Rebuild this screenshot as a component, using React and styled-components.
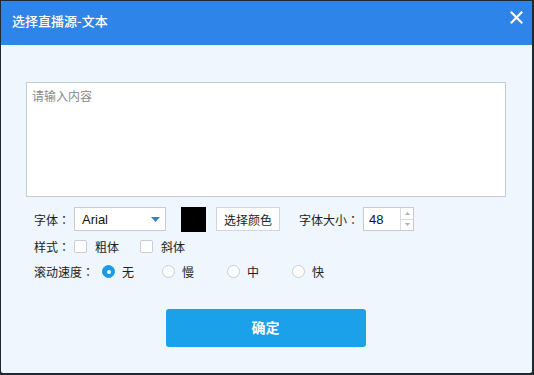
import React from "react";
import styled, { createGlobalStyle } from "styled-components";

const Global = createGlobalStyle`
  html, body { margin: 0; padding: 0; background: #1e2a33; }
  body { font-family: "Noto Sans CJK SC", "Noto Sans", sans-serif; }
  * { box-sizing: border-box; }
`;

const Win = styled.div`
  width: 534px;
  height: 375px;
  background: #1e2a33;
  padding: 1px 2px 2px 1px;
  display: flex;
`;

const Dialog = styled.div`
  flex: 1;
  display: flex;
  flex-direction: column;
  background: #eff6fd;
  border-radius: 2px;
  overflow: hidden;
`;

const TitleBar = styled.div`
  height: 44px;
  background: #2f84ea;
  display: flex;
  align-items: center;
  justify-content: space-between;
  padding: 0 8px 5px 11px;
  color: #fff;
  font-size: 13px;
  font-weight: 500;
`;

const CloseBtn = styled.div`
  width: 16px;
  height: 16px;
  display: flex;
  align-items: center;
  justify-content: center;
  margin-bottom: 7px;
`;

const Body = styled.div`
  flex: 1;
  display: flex;
  flex-direction: column;
  padding: 37px 26px 0 25px;
`;

const TextArea = styled.div`
  height: 115px;
  background: #fff;
  border: 1px solid #c6ccd3;
  padding: 4px 5px;
  font-size: 12px;
  color: #8a8a8a;
`;

const Row = styled.div`
  display: flex;
  align-items: center;
  height: ${p => p.$h || 25}px;
  margin-top: ${p => p.$mt || 0}px;
  padding-left: 8px;
  font-size: 12px;
  color: #222;
`;

const Label = styled.span`
  width: ${p => p.$w || 40}px;
  margin-left: ${p => p.$ml || 0}px;
  flex-shrink: 0;
  white-space: nowrap;
`;

const Colon = styled.span`
  font-family: "Noto Sans CJK TC", "Noto Sans CJK SC", sans-serif;
`;

const Select = styled.div`
  width: 92px;
  height: 24px;
  background: #fff;
  border: 1px solid #c6ccd3;
  display: flex;
  align-items: center;
  justify-content: space-between;
  padding: 0 5px 0 7px;
  font-family: "Liberation Sans", Arial, sans-serif;
  font-size: 13px;
  color: #111;
`;

const Swatch = styled.div`
  width: 25px;
  height: 25px;
  background: #000;
  margin-left: 15px;
`;

const Button = styled.div`
  height: 24px;
  padding: 0 7px;
  margin-left: 10px;
  background: #fff;
  border: 1px solid #cfd6dd;
  display: flex;
  align-items: center;
  font-size: 12px;
  color: #222;
`;

const NumInput = styled.div`
  width: 51px;
  height: 24px;
  background: #fff;
  border: 1px solid #c6ccd3;
  display: flex;
  font-family: "Liberation Sans", Arial, sans-serif;
  font-size: 13px;
  color: #111;
`;

const NumVal = styled.div`
  flex: 1;
  display: flex;
  align-items: center;
  padding-left: 5px;
`;

const Spin = styled.div`
  width: 13px;
  border-left: 1px solid #d8dde2;
  display: flex;
  flex-direction: column;
`;

const SpinHalf = styled.div`
  flex: 1;
  display: flex;
  align-items: center;
  justify-content: center;
  border-top: ${p => (p.$bottom ? "1px solid #d8dde2" : "none")};
`;

const Check = styled.span`
  width: 13px;
  height: 13px;
  border: 1px solid #c8ced4;
  background: #fff;
  border-radius: 2px;
  margin: 0 8px 0 0;
  flex-shrink: 0;
`;

const Option = styled.label`
  display: flex;
  align-items: center;
  margin-right: ${p => p.$mr || 0}px;
`;

const Radio = styled.span`
  width: 13px;
  height: 13px;
  border-radius: 50%;
  flex-shrink: 0;
  margin-right: 7px;
  display: flex;
  align-items: center;
  justify-content: center;
  background: ${p => (p.$on ? "#1a9be6" : "#fff")};
  border: 1px solid ${p => (p.$on ? "#1a9be6" : "#c8ced4")};
  &::after {
    content: "";
    width: 4px;
    height: 4px;
    border-radius: 50%;
    background: #fff;
    display: ${p => (p.$on ? "block" : "none")};
  }
`;

const Footer = styled.div`
  display: flex;
  justify-content: center;
  margin-top: 25px;
  padding-right: 1px;
`;

const Primary = styled.div`
  width: 200px;
  height: 38px;
  background: #1ba1e9;
  border-radius: 3px;
  display: flex;
  align-items: center;
  justify-content: center;
  color: #fff;
  font-size: 14px;
  font-weight: bold;
  padding-bottom: 2px;
`;

export default function App() {
  return (
    <Win>
      <Global />
      <Dialog>
        <TitleBar>
          <span>选择直播源-文本</span>
          <CloseBtn>
            <svg width="13" height="13" viewBox="0 0 13 13">
              <path d="M1.5 1.5 L11.5 11.5 M11.5 1.5 L1.5 11.5" stroke="#fff" strokeWidth="2.2" strokeLinecap="square" />
            </svg>
          </CloseBtn>
        </TitleBar>
        <Body>
          <TextArea>请输入内容</TextArea>
          <Row $mt={10} $h={24}>
            <Label>字体<Colon>：</Colon></Label>
            <Select>
              <span>Arial</span>
              <svg width="9" height="5" viewBox="0 0 9 5">
                <path d="M0 0 L9 0 L4.5 5 Z" fill="#3b7fc4" />
              </svg>
            </Select>
            <Swatch />
            <Button>选择颜色</Button>
            <Label $w={64} $ml={19}>字体大小<Colon>：</Colon></Label>
            <NumInput>
              <NumVal>48</NumVal>
              <Spin>
                <SpinHalf>
                  <svg width="5" height="3" viewBox="0 0 5 3"><path d="M0 3 L2.5 0 L5 3 Z" fill="#a9b0b7" /></svg>
                </SpinHalf>
                <SpinHalf $bottom>
                  <svg width="5" height="3" viewBox="0 0 5 3"><path d="M0 0 L2.5 3 L5 0 Z" fill="#a9b0b7" /></svg>
                </SpinHalf>
              </Spin>
            </NumInput>
          </Row>
          <Row $mt={3} $h={25}>
            <Label>样式<Colon>：</Colon></Label>
            <Option $mr={21}><Check />粗体</Option>
            <Option><Check />斜体</Option>
          </Row>
          <Row $h={25}>
            <Label $w={68}>滚动速度<Colon>：</Colon></Label>
            <Option $mr={28}><Radio $on />无</Option>
            <Option $mr={33}><Radio />慢</Option>
            <Option $mr={33}><Radio />中</Option>
            <Option><Radio />快</Option>
          </Row>
          <Footer>
            <Primary>确定</Primary>
          </Footer>
        </Body>
      </Dialog>
    </Win>
  );
}
